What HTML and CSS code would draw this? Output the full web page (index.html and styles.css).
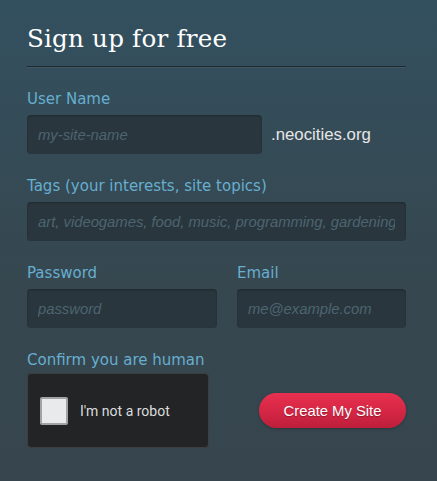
FILE: index.html
```html
<!DOCTYPE html>
<html>
<head>
<meta charset="utf-8">
<link rel="stylesheet" href="styles.css">
</head>
<body>
<div class="panel">
  <h2 class="title">Sign up for free</h2>
  <div class="field first">
    <label class="label">User Name</label>
    <div class="row">
      <input class="input input-user" placeholder="my-site-name">
      <span class="suffix">.neocities.org</span>
    </div>
  </div>
  <div class="field block">
    <label class="label">Tags (your interests, site topics)</label>
    <input class="input input-full" placeholder="art, videogames, food, music, programming, gardening, cats">
  </div>
  <div class="pair block">
    <div class="field col-pass">
      <label class="label">Password</label>
      <input class="input input-full" placeholder="password">
    </div>
    <div class="field col-email">
      <label class="label">Email</label>
      <input class="input input-full" placeholder="me@example.com">
    </div>
  </div>
  <div class="field block">
    <label class="label">Confirm you are human</label>
    <div class="bottom">
      <div class="captcha">
        <span class="check"></span>
        <span class="captcha-text">I'm not a robot</span>
      </div>
      <button class="btn">Create My Site</button>
    </div>
  </div>
</div>
</body>
</html>
```

FILE: styles.css
```css
html, body {
  margin: 0;
  padding: 0;
}
body {
  width: 437px;
  height: 481px;
  background: linear-gradient(to bottom, #33505f 0%, #36474f 60%, #37464e 100%);
  overflow: hidden;
}
.panel {
  padding: 21px 31px 0 27px;
}
.title {
  margin: 0;
  font-family: "DejaVu Serif", "Liberation Serif", serif;
  font-weight: normal;
  font-size: 24.6px;
  line-height: 36px;
  color: #ffffff;
  padding-bottom: 9px;
  border-bottom: 1px solid #1f2a30;
  box-shadow: 0 1px 0 rgba(255,255,255,0.06);
  letter-spacing: 0.2px;
}
.field {
  display: flex;
  flex-direction: column;
}
.label {
  font-family: "DejaVu Sans", Verdana, sans-serif;
  font-size: 15px;
  line-height: 18px;
  color: #67aed0;
  margin-bottom: 7px;
}
.first {
  margin-top: 23px;
}
.block {
  margin-top: 23px;
}
.row {
  display: flex;
  align-items: center;
}
.input {
  box-sizing: border-box;
  height: 39px;
  border: none;
  border-radius: 4px;
  background: #29363d;
  box-shadow: inset 0 1px 2px rgba(0,0,0,0.25);
  padding: 0 11px;
  font-family: "Liberation Sans", Arial, sans-serif;
  font-size: 14.8px;
  color: #dddddd;
  outline: none;
}
.input::placeholder {
  font-style: italic;
  color: #4d6571;
}
.input-user {
  width: 235px;
}
.input-full {
  width: 100%;
}
.suffix {
  margin-left: 9px;
  font-family: "Liberation Sans", Arial, sans-serif;
  font-size: 16.8px;
  color: #e6e6e6;
}
.pair {
  display: flex;
  gap: 20px;
}
.col-pass {
  width: 190px;
}
.col-email {
  flex: 1;
}
.bottom {
  display: flex;
  align-items: center;
  margin-top: -3px;
}
.captcha {
  box-sizing: border-box;
  width: 182px;
  height: 75px;
  background: #222426;
  border: 1px solid #3c3e40;
  border-radius: 4px;
  display: flex;
  align-items: center;
  padding-left: 12px;
}
.check {
  box-sizing: border-box;
  width: 28px;
  height: 28px;
  background: #e9eaeb;
  border: 2px solid #a3a3a3;
  border-radius: 2px;
}
.captcha-text {
  margin-left: 12px;
  font-family: Roboto, "Liberation Sans", sans-serif;
  font-size: 14px;
  color: #dcdcdc;
}
.btn {
  margin-left: 50px;
  width: 147px;
  height: 35px;
  border: none;
  border-radius: 18px;
  background: linear-gradient(to bottom, #e8304f 0%, #d42644 55%, #bc1f3b 100%);
  box-shadow: 0 1px 3px rgba(0,0,0,0.25);
  font-family: "Liberation Sans", Arial, sans-serif;
  font-size: 14.8px;
  color: #ffffff;
  text-shadow: 0 1px 1px rgba(0,0,0,0.3);
  padding: 0;
}
```
